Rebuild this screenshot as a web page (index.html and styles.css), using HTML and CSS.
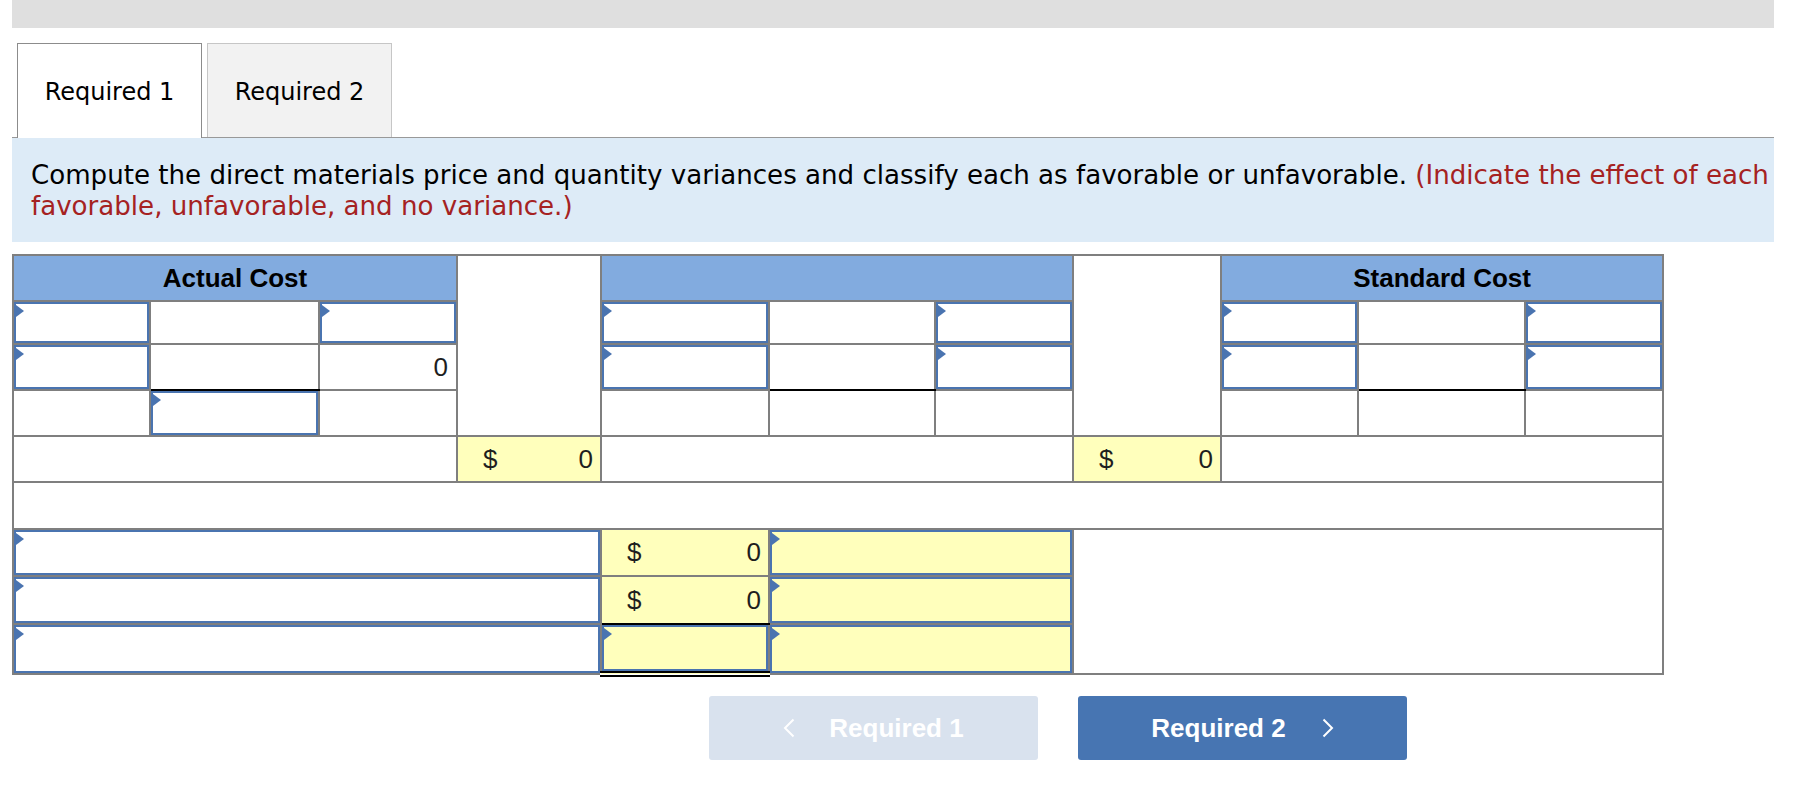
FILE: index.html
```html
<!DOCTYPE html>
<html lang="en">
<head>
<meta charset="utf-8">
<title>Required 1</title>
<link rel="stylesheet" href="styles.css">
</head>
<body>
<div class="page">
  <div class="topbar"></div>

  <div class="tabs">
    <div class="tab active">Required 1</div>
    <div class="tab">Required 2</div>
  </div>

  <div class="instructions">
    <p class="instr-text">Compute the direct materials price and quantity variances and classify each as favorable or unfavorable. <span class="red">(Indicate the effect of each<br>favorable, unfavorable, and no variance.)</span></p>
  </div>

  <table class="grid">
    <colgroup>
      <col class="col-a"><col class="col-b"><col class="col-c"><col class="col-d">
      <col class="col-e"><col class="col-f"><col class="col-g"><col class="col-h">
      <col class="col-i"><col class="col-j"><col class="col-k">
    </colgroup>
    <tr class="row-head">
      <th class="hd" colspan="3">Actual Cost</th>
      <td class="blank" rowspan="4"></td>
      <th class="hd" colspan="3"></th>
      <td class="blank" rowspan="4"></td>
      <th class="hd" colspan="3">Standard Cost</th>
    </tr>
    <tr class="row-1">
      <td class="inp"><span class="tri"></span></td>
      <td></td>
      <td class="inp"><span class="tri"></span></td>
      <td class="inp"><span class="tri"></span></td>
      <td></td>
      <td class="inp"><span class="tri"></span></td>
      <td class="inp"><span class="tri"></span></td>
      <td></td>
      <td class="inp"><span class="tri"></span></td>
    </tr>
    <tr class="row-2">
      <td class="inp"><span class="tri"></span></td>
      <td class="under"></td>
      <td class="num">0</td>
      <td class="inp"><span class="tri"></span></td>
      <td class="under"></td>
      <td class="inp"><span class="tri"></span></td>
      <td class="inp"><span class="tri"></span></td>
      <td class="under"></td>
      <td class="inp"><span class="tri"></span></td>
    </tr>
    <tr class="row-3">
      <td></td>
      <td class="inp"><span class="tri"></span></td>
      <td></td>
      <td></td>
      <td></td>
      <td></td>
      <td></td>
      <td></td>
      <td></td>
    </tr>
    <tr class="row-4">
      <td colspan="3"></td>
      <td class="amt"><div class="amt-in"><span>$</span><span>0</span></div></td>
      <td colspan="3"></td>
      <td class="amt"><div class="amt-in"><span>$</span><span>0</span></div></td>
      <td colspan="3"></td>
    </tr>
    <tr class="row-5">
      <td colspan="11"></td>
    </tr>
    <tr class="row-6">
      <td class="inp" colspan="4"><span class="tri"></span></td>
      <td class="amt"><div class="amt-in"><span>$</span><span>0</span></div></td>
      <td class="inp yellow" colspan="2"><span class="tri"></span></td>
      <td class="blank" colspan="4" rowspan="3"></td>
    </tr>
    <tr class="row-7">
      <td class="inp" colspan="4"><span class="tri"></span></td>
      <td class="amt under"><div class="amt-in"><span>$</span><span>0</span></div></td>
      <td class="inp yellow" colspan="2"><span class="tri"></span></td>
    </tr>
    <tr class="row-8">
      <td class="inp" colspan="4"><span class="tri"></span></td>
      <td class="inp yellow dbl"><span class="tri"></span></td>
      <td class="inp yellow" colspan="2"><span class="tri"></span></td>
    </tr>
  </table>

  <div class="nav">
    <button class="btn prev" type="button">
      <svg class="chev" width="12" height="20" viewBox="0 0 12 20"><polyline points="10.5,1.5 2,10 10.5,18.5" fill="none" stroke="#ffffff" stroke-width="2"/></svg>
      <span>Required 1</span>
    </button>
    <button class="btn next" type="button">
      <span>Required 2</span>
      <svg class="chev" width="12" height="20" viewBox="0 0 12 20"><polyline points="1.5,1.5 10,10 1.5,18.5" fill="none" stroke="#ffffff" stroke-width="2"/></svg>
    </button>
  </div>
</div>
</body>
</html>
```

FILE: styles.css
```css
* {
  box-sizing: border-box;
}

html, body {
  margin: 0;
  padding: 0;
  background: #ffffff;
}

.page {
  margin-left: 12px;
  width: 1762px;
}

.topbar {
  height: 28px;
  background: #dfdfdf;
}

.tabs {
  display: flex;
  align-items: flex-start;
  gap: 5px;
  margin-top: 15px;
  padding-left: 5px;
  height: 95px;
  border-bottom: 1px solid #999999;
}

.tab {
  width: 185px;
  height: 94px;
  display: flex;
  align-items: center;
  justify-content: center;
  font-family: "DejaVu Sans", Verdana, sans-serif;
  font-size: 24px;
  color: #000000;
  background: #f2f2f2;
  border: 1px solid #c6c6c6;
  border-bottom: none;
  padding-top: 2px;
}

.tab.active {
  height: 95px;
  margin-bottom: -1px;
  background: #ffffff;
  border-color: #8c8c8c;
}

.instructions {
  height: 104px;
  background: #ddebf7;
  padding: 22px 10px 0 19px;
  overflow: hidden;
}

.instr-text {
  margin: 0;
  font-family: "DejaVu Sans", Verdana, sans-serif;
  font-size: 26.1px;
  line-height: 31px;
  color: #000000;
  white-space: nowrap;
}

.red {
  color: #a52222;
}

.grid {
  margin-top: 12px;
  border-collapse: collapse;
  table-layout: fixed;
  width: 1652px;
  font-family: "Liberation Sans", Arial, sans-serif;
  font-size: 26px;
  color: #1e1e1e;
}

.col-a { width: 137px; }
.col-b { width: 169px; }
.col-c { width: 138px; }
.col-d { width: 144px; }
.col-e { width: 168px; }
.col-f { width: 166px; }
.col-g { width: 138px; }
.col-h { width: 148px; }
.col-i { width: 137px; }
.col-j { width: 167px; }
.col-k { width: 138px; }

.grid th,
.grid td {
  border: 2px solid #7f7f7f;
  padding: 0;
  background: #ffffff;
}

.row-head { height: 46px; }
.row-1 { height: 43px; }
.row-2 { height: 46px; }
.row-3 { height: 46px; }
.row-4 { height: 46px; }
.row-5 { height: 47px; }
.row-6 { height: 47px; }
.row-7 { height: 48px; }
.row-8 { height: 50px; }

.grid th.hd {
  background: #82abdf;
  font-weight: bold;
  text-align: center;
  color: #000000;
}

.grid td.inp {
  vertical-align: top;
  padding: 3px 0 0 2px;
  box-shadow: inset 0 0 0 2px #4a74b0;
}

.grid td.yellow,
.grid td.amt {
  background: #ffffbc;
}

.tri {
  display: block;
  width: 0;
  height: 0;
  border-left: 8px solid #4a74b0;
  border-top: 6px solid transparent;
  border-bottom: 6px solid transparent;
}

.grid td.num {
  text-align: right;
  padding-right: 8px;
}

.amt-in {
  display: flex;
  justify-content: space-between;
  padding: 0 7px 0 25px;
}

.grid td.under {
  border-bottom: 2px solid #000000;
}

.grid td.dbl {
  border-bottom: 6px double #000000;
}

.nav {
  display: flex;
  gap: 40px;
  margin-top: 19px;
  padding-left: 697px;
}

.btn {
  width: 329px;
  height: 64px;
  border: none;
  border-radius: 3px;
  display: flex;
  align-items: center;
  justify-content: center;
  gap: 34px;
  font-family: "Liberation Sans", Arial, sans-serif;
  font-weight: bold;
  font-size: 26px;
  color: #ffffff;
  padding: 0;
}

.btn.prev {
  background: #d9e2ee;
}

.btn.next {
  background: #4775b2;
  gap: 36px;
}

.chev {
  display: block;
}
```
